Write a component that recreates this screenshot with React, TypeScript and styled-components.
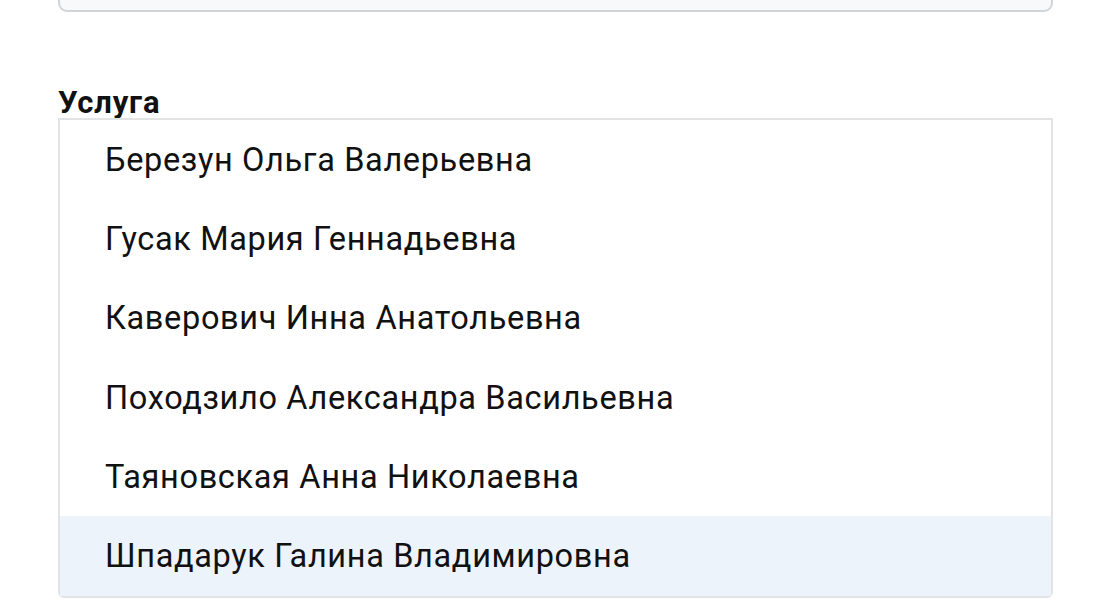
import React from "react";
import styled, { createGlobalStyle } from "styled-components";

const GlobalStyle = createGlobalStyle`
  html, body {
    margin: 0;
    padding: 0;
    background: #fff;
    font-family: Roboto, "Noto Sans", sans-serif;
    color: #111;
    overflow: hidden;
  }
`;

const Page = styled.div`
  padding: 0 56px 0 58px;
  height: 600px;
  overflow: hidden;
`;

// field above, only its bottom edge is visible
const PrevField = styled.div`
  height: 60px;
  margin-top: -48px;
  border: 2px solid #d3d4d7;
  border-radius: 9px;
  background: #f8f9fb;
  box-sizing: border-box;
`;

const Label = styled.div`
  margin-top: 76px;
  font-size: 31px;
  font-weight: 700;
  letter-spacing: 0.8px;
  line-height: 30px;
  color: #111;
`;

const ListBox = styled.div`
  position: relative;
  background: #fff;
  border: 2px solid #e2e3e5;
  border-radius: 0 0 6px 6px;
  display: flex;
  flex-direction: column;
`;

const Option = styled.div<{ $selected?: boolean }>`
  height: 79.3px;
  display: flex;
  align-items: center;
  padding-left: 45px;
  font-size: 32.5px;
  letter-spacing: 0.65px;
  color: #111;
  background: ${(p) => (p.$selected ? "#edf3fb" : "#fff")};
`;

const names = [
  "Березун Ольга Валерьевна",
  "Гусак Мария Геннадьевна",
  "Каверович Инна Анатольевна",
  "Походзило Александра Васильевна",
  "Таяновская Анна Николаевна",
  "Шпадарук Галина Владимировна",
];

export default function App() {
  return (
    <Page>
      <GlobalStyle />
      <PrevField />
      <Label>Услуга</Label>
      <ListBox>
        {names.map((n, i) => (
          <Option key={n} $selected={i === names.length - 1}>
            {n}
          </Option>
        ))}
      </ListBox>
    </Page>
  );
}
